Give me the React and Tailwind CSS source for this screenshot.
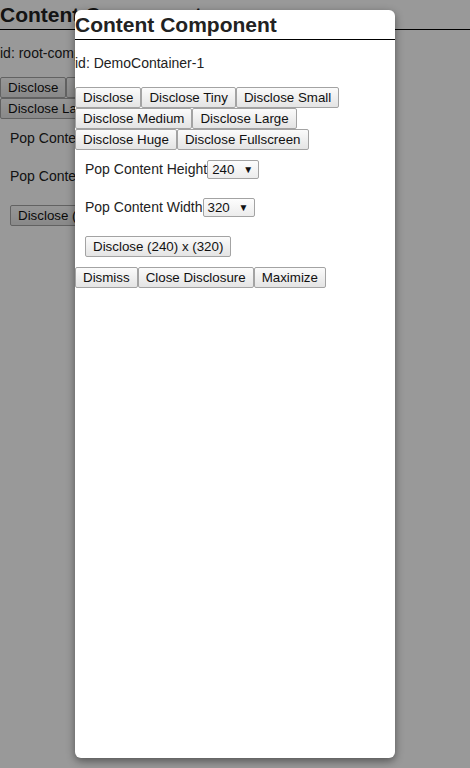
import React from "react";

const btn =
  "h-[21px] px-[7px] border border-[#a3a3a3] rounded-[2px] bg-gradient-to-b from-[#fbfbfb] to-[#e4e4e4] text-[13.33px] leading-[15px] text-[#111] whitespace-nowrap";

function Select({ value }) {
  return (
    <div className="h-[19px] w-[52px] border border-[#a3a3a3] rounded-[2px] bg-gradient-to-b from-[#fdfdfd] to-[#ececec] flex items-center justify-between pl-[4px] pr-[5px] text-[13.33px] leading-[15px] text-[#111]">
      <span>{value}</span>
      <span className="text-[10px] leading-[10px]">▼</span>
    </div>
  );
}

function Content({ id, modal }) {
  return (
    <div className="text-[#222] font-['Liberation_Sans',Arial,sans-serif]">
      <div className="h-[30px] border-b border-black text-[21px] font-bold leading-[29px] whitespace-nowrap">
        Content Component
      </div>
      <p className="mt-[15px] mb-[16px] h-[16px] text-[14px] leading-[16px] whitespace-nowrap">
        id: {id}
      </p>
      <div className="flex flex-wrap">
        <button className={btn}>Disclose</button>
        <button className={btn}>Disclose Tiny</button>
        <button className={btn}>Disclose Small</button>
        <button className={btn}>Disclose Medium</button>
        <button className={btn}>Disclose Large</button>
        <button className={btn}>Disclose Huge</button>
        <button className={btn}>Disclose Fullscreen</button>
      </div>
      <div className="pl-[10px] mt-[10px] flex flex-col gap-[19px]">
        <div className="flex items-center h-[19px] text-[14px] whitespace-nowrap">
          <span>Pop Content Height</span>
          <Select value="240" />
        </div>
        <div className="flex items-center h-[19px] text-[14px] whitespace-nowrap">
          <span>Pop Content Width</span>
          <Select value="320" />
        </div>
        <div className="flex">
          <button className={btn}>Disclose (240) x (320)</button>
        </div>
      </div>
      {modal && (
        <div className="flex flex-wrap mt-[10px]">
          <button className={btn}>Dismiss</button>
          <button className={btn}>Close Disclosure</button>
          <button className={btn}>Maximize</button>
        </div>
      )}
    </div>
  );
}

export default function App() {
  return (
    <div className="relative w-[470px] h-[768px] overflow-hidden bg-white">
      <Content id="root-component" />
      <div className="absolute inset-0 bg-black/40" />
      <div className="absolute left-[75px] top-[10px] w-[320px] h-[748px] bg-white rounded-[6px] overflow-hidden shadow-[0_3px_8px_rgba(0,0,0,0.45)]">
        <Content id="DemoContainer-1" modal />
      </div>
    </div>
  );
}
